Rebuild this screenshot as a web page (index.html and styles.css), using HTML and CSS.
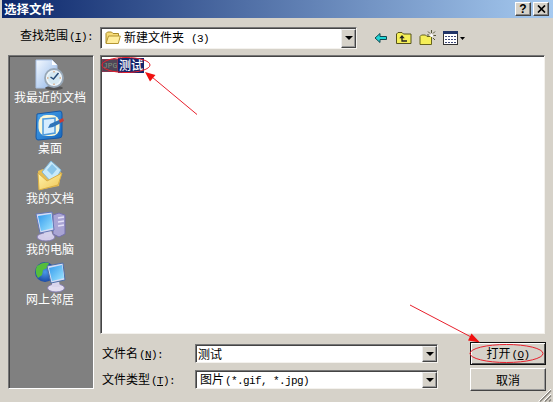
FILE: index.html
```html
<!DOCTYPE html>
<html lang="zh-CN">
<head>
    <meta charset="UTF-8">
    <title>选择文件</title>
    <link rel="stylesheet" href="styles.css">
</head>
<body>
    <div class="dialog">
        <header class="title-bar">
            <h1>选择文件</h1>
            <button class="title-btn" type="button">?</button>
            <button class="title-btn" type="button">
                <svg width="9" height="8" viewBox="0 0 9 8"><path d="M1 0.5l7 7M8 0.5l-7 7" stroke="#000" stroke-width="1.7"/></svg>
            </button>
        </header>

        <div class="toolbar">
            <label class="look-in">查找范围<span class="en">(<u>I</u>):</span></label>
            <div class="combo folder-combo">
                <svg width="16" height="14" viewBox="0 0 16 14">
                    <path d="M1 12V2.5L2.5 1h4L8 2.5h5.500V5" fill="#f7dc78" stroke="#a88a28"/>
                    <path d="M1 12.500L3.500 5H15.300l-2 7.500z" fill="#ffed9c" stroke="#b49532"/>
                </svg>
                <span class="value">新建文件夹<span class="en"> (3)</span></span>
                <button class="drop" type="button"></button>
            </div>
            <div class="tools">
                <svg width="14" height="12" viewBox="0 0 14 12"><path d="M1 6l5-4.500V4.500h6.500v3H6v3z" fill="#20d5d5" stroke="#104850"/></svg>
                <svg width="17" height="14" viewBox="0 0 17 14">
                    <path d="M1.500 12.500V3L3 1.500h4L8.500 3H16v9.500z" fill="#f5ef58" stroke="#55521c"/>
                    <path d="M7 5v5h5" fill="none" stroke="#222" stroke-width="1.300"/><path d="M4.300 7.300L7 4l2.700 3.300z" fill="#222"/>
                </svg>
                <svg width="17" height="16" viewBox="0 0 17 16">
                    <path d="M1 14.500V6.500L2.500 5h4L8 6.500h4.500v8z" fill="#f5ef58" stroke="#66631c"/>
                    <path d="M12.500 0v3M9 1.500l2 2M16 1.500l-2 2M14.500 5.500H17M14 8l2 2M8 5h2" stroke="#55553a"/>
                    <circle cx="12.500" cy="5.500" r="1.500" fill="#fff"/>
                </svg>
                <svg width="24" height="14" viewBox="0 0 24 14">
                    <rect x="0.500" y="0.500" width="14" height="13" fill="#fff" stroke="#333"/>
                    <path d="M0 1.500h15" stroke="#203468" stroke-width="3"/>
                    <path d="M2 5.500h11M2 8.500h11M2 11.500h11" stroke="#404a78" stroke-dasharray="2 1"/>
                    <path d="M17 6h5l-2.500 3z" fill="#000"/>
                </svg>
            </div>
        </div>

        <main class="content">
            <nav class="places">
                <a class="place">
                    <svg width="32" height="32" viewBox="0 0 32 32">
                        <path d="M2 1h16l5 5v23H2z" fill="url(#paper)" stroke="#a9c2e6"/>
                        <path d="M18 1v5h5z" fill="#fff"/>
                        <ellipse cx="20" cy="29" rx="9" ry="2" fill="#555"/>
                        <circle cx="20" cy="19" r="9" fill="#edf5fa" stroke="#98a8b8" stroke-width="1.800"/>
                        <circle cx="20" cy="19" r="6.500" fill="#d6e9f2"/>
                        <path d="M24.500 14l-5 6-3-2" fill="none" stroke="#284c78" stroke-width="1.500"/>
                        <path d="M20 12v1.500M27 19h-1.500M20 26v-1.500M13 19h1.500" stroke="#d58a50"/>
                    </svg>
                    <span>我最近的文档</span>
                </a>
                <a class="place">
                    <svg width="32" height="32" viewBox="0 0 32 32">
                        <path d="M3 4l23-3q2 0 2 3v21q0 3-3 3L4 30q-2 0-2-3z" fill="url(#blue)" stroke="#1458a8"/>
                        <rect x="4.500" y="5" width="21" height="21" rx="8" fill="#fbf8d8"/>
                        <path d="M9 9l12-1v15l-12 2z" fill="#d5edff" stroke="#4f9bdc" stroke-width="1.500"/>
                        <path d="M14 18l2-4 9-4 2 3-8 4z" fill="#2f74b8"/>
                        <path d="M25 10l4-2 1 3-4 2z" fill="#c73c35"/>
                    </svg>
                    <span>桌面</span>
                </a>
                <a class="place">
                    <svg width="32" height="32" viewBox="0 0 32 32">
                        <path d="M4 11l5-2 4 3 14 0-2 14-20 4z" fill="#e6bd52"/>
                        <path d="M8 12L17 1l10 9-8 14z" fill="#c7e9fa" stroke="#82b6d7"/>
                        <path d="M13 10l5-6 5 5-5 6z" fill="#8ac6ea"/>
                        <path d="M5 30L4 13l9 8 15-8-4 12z" fill="url(#gold)" stroke="#d9af47"/>
                    </svg>
                    <span>我的文档</span>
                </a>
                <a class="place">
                    <svg width="32" height="32" viewBox="0 0 32 32">
                        <path d="M19 4l6-2 6 2v19l-6 3-6-3z" fill="#a9a4d4" stroke="#7470ad"/>
                        <path d="M24 7l6-1M24 11l6-1M24 15l6-1" stroke="#e3e0f7" stroke-width="1.500"/>
                        <ellipse cx="12" cy="26" rx="9" ry="4" fill="#d3cdea" stroke="#7f79ac"/>
                        <path d="M9 20l8-1 2 6-8 2z" fill="#d5d1eb"/>
                        <path d="M2 3l16-2 2 18-14 3z" fill="#d3dcf5" stroke="#6476b5"/>
                        <path d="M4 5l13-2 2 14-12 3z" fill="url(#screen)"/>
                    </svg>
                    <span>我的电脑</span>
                </a>
                <a class="place">
                    <svg width="32" height="32" viewBox="0 0 32 32">
                        <circle cx="11" cy="11" r="10" fill="url(#earth)"/>
                        <path d="M3 5q6-5 12-3l-2 5-4 2-1 5-4 3q-4-6-1-12z" fill="#55bd3c"/>
                        <ellipse cx="22" cy="27" rx="8.500" ry="4" fill="#e2ddf0" stroke="#8780b2"/>
                        <path d="M18 20h7l1 6h-8z" fill="#d9d5ec"/>
                        <path d="M13 5l16-3 2 17-14 3z" fill="#d3dcf5" stroke="#4e6fa8"/>
                        <path d="M15 7l13-3 2 13-12 3z" fill="url(#screen)"/>
                    </svg>
                    <span>网上邻居</span>
                </a>
            </nav>

            <div class="right">
                <div class="file-list">
                    <div class="file selected">
                        <span class="file-icon">JPG</span>
                        <span class="file-name">测试</span>
                    </div>
                </div>

                <form class="fields">
                    <label>文件名<span class="en">(<u>N</u>):</span></label>
                    <div class="combo">
                        <span class="value">测试</span>
                        <button class="drop" type="button"></button>
                    </div>
                    <button class="btn default" type="button">打开<span class="en">(<u>O</u>)</span></button>

                    <label>文件类型<span class="en">(<u>T</u>):</span></label>
                    <div class="combo type-combo">
                        <span class="value">图片<span class="en">(*.gif, *.jpg)</span></span>
                        <button class="drop" type="button"></button>
                    </div>
                    <button class="btn" type="button">取消</button>
                </form>
            </div>
        </main>

        <!-- red hints over the dialog -->
        <svg class="marks" width="553" height="402" viewBox="0 0 553 402">
            <defs>
                <linearGradient id="paper" x2="1" y2="1"><stop stop-color="#f4f9ff"/><stop offset="1" stop-color="#8fb5e8"/></linearGradient>
                <linearGradient id="blue" x2="1" y2="1"><stop stop-color="#4aa6ee"/><stop offset="1" stop-color="#1767bd"/></linearGradient>
                <linearGradient id="gold" x2="1" y2="1"><stop stop-color="#fff4ac"/><stop offset="1" stop-color="#efc554"/></linearGradient>
                <linearGradient id="screen" x2="1" y2="1"><stop stop-color="#3199ed"/><stop offset="1" stop-color="#a0e6ff"/></linearGradient>
                <radialGradient id="earth"><stop stop-color="#4b98e8"/><stop offset="1" stop-color="#1b4ba7"/></radialGradient>
            </defs>
            <g fill="none" stroke="#e8202c">
                <ellipse cx="126" cy="65" rx="24" ry="7.500"/>
                <ellipse cx="506.500" cy="353.500" rx="36.500" ry="9"/>
                <path d="M197 114.500L152 77M410 305l63 33"/>
            </g>
            <path d="M145 72l10.500 3-5.500 6.500zM480 342.500l-8.500-9-3.500 7z" fill="#f01010"/>
            <path d="M540 401.500l11-11M545 401.500l6-6M549 401.500l2-2" stroke="#85827b" stroke-width="1.500"/>
            <path d="M538.500 401.500l12.500-12.500M543.500 401.500l7.500-7.500" stroke="#fff"/>
        </svg>
    </div>
</body>
</html>
```
FILE: styles.css
```css
* {
    margin: 0;
    padding: 0;
    box-sizing: border-box;
}

body {
    width: 553px;
    height: 402px;
    overflow: hidden;
    background-color: #d6d2c9;
    color: #000;
    font: 12px/14px "Noto Sans CJK SC", sans-serif;
}

button {
    font: inherit;
    color: inherit;
}

svg {
    display: block;
    flex: none;
}

.en {
    margin-left: 1px;
    font-family: "Liberation Mono", monospace;
    font-size: 11px;
    letter-spacing: -0.6px;
    white-space: pre;
}

.dialog {
    position: relative;
    display: flex;
    flex-direction: column;
    height: 402px;
    padding-left: 2px;
}

/* Title bar */
.title-bar {
    display: flex;
    align-items: center;
    height: 18px;
    padding: 0 4px 1px 2px;
    background: linear-gradient(to right, #0c276b, #a6caf0);
    color: #fff;
}

.title-bar h1 {
    flex: 1;
    font-size: 12.5px;
    line-height: 16px;
    font-weight: bold;
}

.title-btn {
    display: flex;
    align-items: center;
    justify-content: center;
    width: 16px;
    height: 14px;
    margin-left: 2px;
    background-color: #d6d2c9;
    border: 1px solid;
    border-color: #fff #444 #444 #fff;
    box-shadow: inset -1px -1px #888;
    color: #000;
    font: bold 12px/12px "Liberation Sans", sans-serif;
}

/* Toolbar */
.toolbar {
    display: flex;
    align-items: center;
    height: 37px;
    padding-left: 18px;
}

.look-in {
    width: 80px;
    padding-bottom: 1px;
}

.combo {
    display: flex;
    align-items: center;
    height: 19px;
    padding: 1px 0 0 2px;
    background-color: #fff;
    border: 1px solid;
    border-color: #777 #f4f2ee #f4f2ee #777;
    box-shadow: inset 1px 1px #444;
}

.combo .value {
    flex: 1;
}

.folder-combo {
    width: 257px;
    height: 22px;
    padding-left: 4px;
    margin-top: 2px;
}

.folder-combo .value {
    padding-left: 3px;
}

.drop {
    display: flex;
    align-items: center;
    justify-content: center;
    width: 15px;
    height: 100%;
    background-color: #d6d2c9;
    border: 1px solid;
    border-color: #eee #444 #444 #eee;
    box-shadow: inset -1px -1px #999;
}

.drop::after {
    content: "";
    border: 4px solid transparent;
    border-top-color: #000;
    border-bottom: 0;
}

.tools {
    display: flex;
    align-items: center;
    gap: 7px;
    padding: 2px 0 0 17px;
}

/* Places bar and file list */
.content {
    display: flex;
    flex: 1;
    padding-left: 6px;
}

.places {
    display: flex;
    flex-direction: column;
    align-items: center;
    gap: 4px;
    width: 86px;
    height: 334px;
    padding: 3px 2px 0 0;
    background-color: #808080;
    border: 1px solid;
    border-color: #777 #fff #fff #777;
    box-shadow: inset 1px 1px #444;
    color: #fff;
}

.place {
    display: flex;
    flex-direction: column;
    align-items: center;
    height: 46.5px;
    white-space: nowrap;
}

.place span {
    margin-top: -1px;
}

.right {
    width: 445px;
    margin-left: 6px;
}

.file-list {
    height: 279px;
    padding: 1px;
    background-color: #fff;
    border: 1px solid;
    border-color: #777 #f4f2ee #f4f2ee #777;
    box-shadow: inset 1px 1px #444;
}

.file {
    display: flex;
    align-items: center;
    height: 16px;
}

.file-icon {
    width: 16px;
    height: 13px;
    background-color: #4e4657;
    border: 1px solid #823752;
    color: #81927f;
    font: 8px/11px "Liberation Mono", monospace;
    text-align: center;
}

.file-name {
    height: 15px;
    padding: 0 1px;
    background-color: #14246c;
    color: #fff;
    font-weight: 500;
}

/* File name, file type and buttons */
.fields {
    display: grid;
    grid-template-columns: 93px 243px 108px;
    grid-template-rows: 23px 23px;
    row-gap: 3px;
    align-items: center;
    padding: 8px 0 0 2px;
}

.type-combo {
    padding-left: 4px;
}

.btn {
    width: 76px;
    height: 23px;
    margin-left: 32px;
    background-color: #d6d2c9;
    border: 1px solid;
    border-color: #fff #444 #444 #fff;
    box-shadow: inset -1px -1px #999;
}

.btn.default {
    border-color: #111;
    box-shadow: inset 1px 1px #fff, inset -1px -1px #555;
}

/* Annotation layer */
.marks {
    position: absolute;
    top: 0;
    left: 0;
    pointer-events: none;
}
```
